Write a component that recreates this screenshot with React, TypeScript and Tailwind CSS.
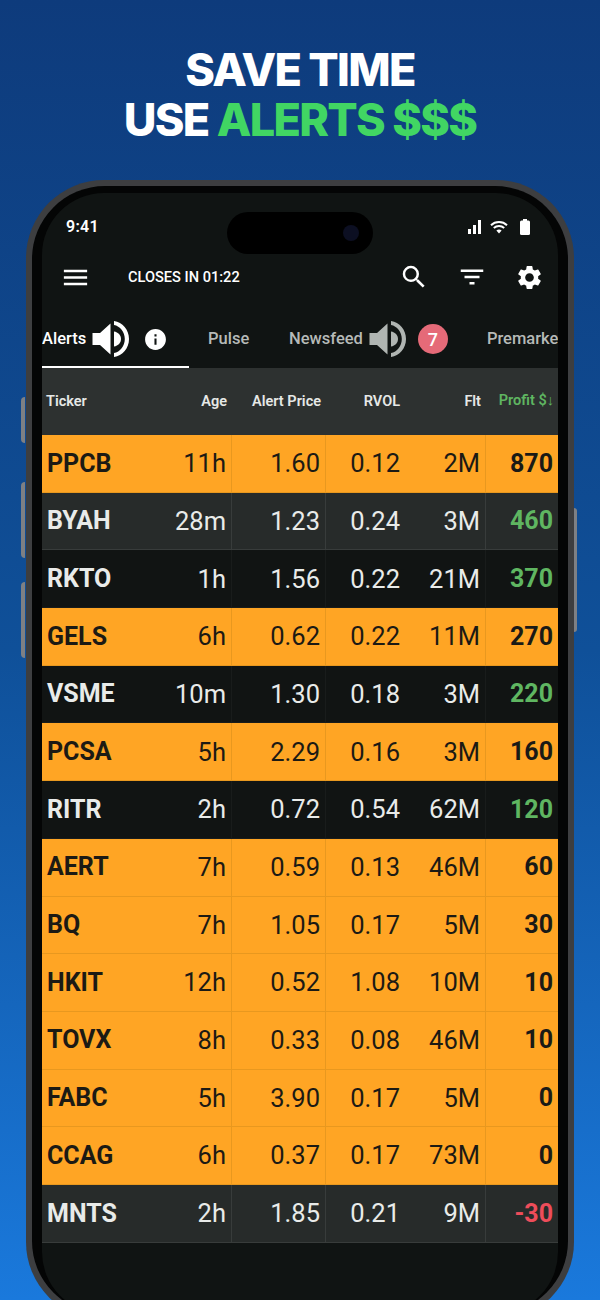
import { MdMenu, MdSearch, MdFilterList, MdSettings, MdInfo } from 'react-icons/md';

type Row = {
  ticker: string;
  age: string;
  price: string;
  rvol: string;
  flt: string;
  profit: string;
  tone: 'orange' | 'gray' | 'dark';
  profitClass: string;
};

const rows: Row[] = [
  { ticker: 'PPCB', age: '11h', price: '1.60', rvol: '0.12', flt: '2M', profit: '870', tone: 'orange', profitClass: 'text-[#1a1a16]' },
  { ticker: 'BYAH', age: '28m', price: '1.23', rvol: '0.24', flt: '3M', profit: '460', tone: 'gray', profitClass: 'text-[#5fb661]' },
  { ticker: 'RKTO', age: '1h', price: '1.56', rvol: '0.22', flt: '21M', profit: '370', tone: 'dark', profitClass: 'text-[#5fb661]' },
  { ticker: 'GELS', age: '6h', price: '0.62', rvol: '0.22', flt: '11M', profit: '270', tone: 'orange', profitClass: 'text-[#1a1a16]' },
  { ticker: 'VSME', age: '10m', price: '1.30', rvol: '0.18', flt: '3M', profit: '220', tone: 'dark', profitClass: 'text-[#5fb661]' },
  { ticker: 'PCSA', age: '5h', price: '2.29', rvol: '0.16', flt: '3M', profit: '160', tone: 'orange', profitClass: 'text-[#1a1a16]' },
  { ticker: 'RITR', age: '2h', price: '0.72', rvol: '0.54', flt: '62M', profit: '120', tone: 'dark', profitClass: 'text-[#5fb661]' },
  { ticker: 'AERT', age: '7h', price: '0.59', rvol: '0.13', flt: '46M', profit: '60', tone: 'orange', profitClass: 'text-[#1a1a16]' },
  { ticker: 'BQ', age: '7h', price: '1.05', rvol: '0.17', flt: '5M', profit: '30', tone: 'orange', profitClass: 'text-[#1a1a16]' },
  { ticker: 'HKIT', age: '12h', price: '0.52', rvol: '1.08', flt: '10M', profit: '10', tone: 'orange', profitClass: 'text-[#1a1a16]' },
  { ticker: 'TOVX', age: '8h', price: '0.33', rvol: '0.08', flt: '46M', profit: '10', tone: 'orange', profitClass: 'text-[#1a1a16]' },
  { ticker: 'FABC', age: '5h', price: '3.90', rvol: '0.17', flt: '5M', profit: '0', tone: 'orange', profitClass: 'text-[#1a1a16]' },
  { ticker: 'CCAG', age: '6h', price: '0.37', rvol: '0.17', flt: '73M', profit: '0', tone: 'orange', profitClass: 'text-[#1a1a16]' },
  { ticker: 'MNTS', age: '2h', price: '1.85', rvol: '0.21', flt: '9M', profit: '-30', tone: 'gray', profitClass: 'text-[#ee4d5a]' },
];

const toneClass = {
  orange: 'bg-[#ffa524] text-[#1c1a14] border-[#e8981f]',
  gray: 'bg-[#272b2a] text-[#e9ebe9] border-[#383c3b]',
  dark: 'bg-[#111413] text-[#e9ebe9] border-[#191c1b]',
};

function Speaker({ color }: { color: string }) {
  return (
    <svg viewBox="0 0 36 36" className="w-[37px] h-[36px]" fill={color}>
      <path d="M0 12h7.500L18 2.500v31L7.500 24H0z" />
      <path d="M21.500 10.500c4.200.6 7 3.800 7 7.500s-2.800 6.900-7 7.500z" />
      <path d="M21.500 0C30 1 36.500 8.700 36.500 18S30 35 21.500 36v-4c6-1 10.800-7 10.800-14S27.500 5 21.500 4z" />
    </svg>
  );
}

export default function App() {
  return (
    <div className="h-[1300px] w-[600px] overflow-hidden bg-gradient-to-b from-[#0e3b7c] via-[#0f5099] to-[#1a79dc] font-['Roboto',sans-serif]">
      <h1 className="pt-[45px] h-[180px] text-center font-['Inter',sans-serif] text-[45px] leading-[50px] font-extrabold tracking-[-1.7px] text-white">
        SAVE TIME
        <br />
        USE <span className="text-[#41d663]">ALERTS $$$</span>
      </h1>

      {/* phone */}
      <div className="relative mx-[26px] h-[1140px] rounded-[78px] bg-[#3d3e40] p-[6px]">
        <div className="absolute -left-[5px] top-[217px] h-[46px] w-[4px] rounded-l bg-[#7e8084]" />
        <div className="absolute -left-[5px] top-[302px] h-[76px] w-[4px] rounded-l bg-[#7e8084]" />
        <div className="absolute -left-[5px] top-[402px] h-[76px] w-[4px] rounded-l bg-[#7e8084]" />
        <div className="absolute -right-[3px] top-[328px] h-[124px] w-[3px] rounded-r bg-[#7e8084]" />

        <div className="h-full rounded-[73px] bg-[#040505] px-[10px] pt-[7px]">
          <div className="relative h-full rounded-[62px] bg-[#101413]">
            {/* status bar */}
            <div className="flex h-[68px] items-center justify-between pl-[24px] pr-[28px] text-white">
              <span className="text-[16px] font-semibold tracking-[0.3px]">9:41</span>
              <div className="flex items-center">
                <svg viewBox="0 0 14 14" className="w-[14px] h-[14px]" fill="#fff">
                  <rect x="0" y="9" width="3" height="5" />
                  <rect x="5" y="5" width="3" height="9" />
                  <rect x="10" y="0" width="3" height="14" />
                </svg>
                <svg viewBox="0 0 18 14" className="ml-[8px] w-[18px] h-[14px]" fill="none" stroke="#fff" strokeWidth="2">
                  <path d="M1 5.200C5.500 1 12.500 1 17 5.200" />
                  <path d="M3.800 8C6.800 5.300 11.200 5.300 14.200 8" />
                  <path d="M9 13.500l-2.600-3c1.500-1.200 3.700-1.200 5.200 0z" fill="#fff" stroke="none" />
                </svg>
                <svg viewBox="0 0 10 16" className="ml-[12px] w-[10px] h-[16px]" fill="#fff">
                  <rect x="3" y="0" width="4" height="2" />
                  <rect x="0" y="1.500" width="10" height="14.500" rx="1.500" />
                </svg>
              </div>
            </div>
            <div className="absolute left-[185px] top-[19px] h-[42px] w-[146px] rounded-full bg-black">
              <div className="absolute right-[14px] top-[13px] h-[16px] w-[16px] rounded-full bg-[#0c0f22]" />
            </div>

            {/* app bar */}
            <div className="flex h-[32px] items-center pl-[18px] pr-[14px] text-white">
              <MdMenu className="h-[31px] w-[31px]" />
              <span className="ml-[37px] mt-[2px] text-[14.600px] font-medium">CLOSES IN 01:22</span>
              <MdSearch className="ml-auto h-[30px] w-[30px]" />
              <MdFilterList className="ml-[28px] h-[30px] w-[30px]" />
              <MdSettings className="ml-[28px] h-[29px] w-[29px]" />
            </div>

            {/* tabs */}
            <div className="mt-[28px] flex h-[47px] overflow-hidden text-[16.500px] font-medium text-[#b6bab8]">
              <div className="flex w-[147px] shrink-0 items-start border-b-2 border-white text-white">
                <div className="flex h-[36px] items-center">
                  <span>Alerts</span>
                  <span className="ml-[6px]"><Speaker color="#ffffff" /></span>
                  <MdInfo className="ml-[14px] h-[25px] w-[25px]" />
                </div>
              </div>
              <div className="flex h-[36px] items-center pl-[19px]">
                <span className="w-[81px] shrink-0">Pulse</span>
                <span>Newsfeed</span>
                <span className="ml-[6px]"><Speaker color="#b0b5b2" /></span>
                <span className="ml-[12px] flex h-[30px] w-[30px] shrink-0 items-center justify-center rounded-full bg-[#e56a78] text-[18px] text-white">7</span>
                <span className="ml-[39px] shrink-0">Premarket</span>
              </div>
            </div>

            {/* table */}
            <div className="grid h-[67px] grid-cols-[100px_90px_94px_79px_81px_72px] items-center bg-[#2d3130] text-[14.500px] font-semibold text-[#e6e8e6]">
              <span className="pl-[4px]">Ticker</span>
              <span className="pr-[5px] text-right">Age</span>
              <span className="pr-[5px] text-right whitespace-nowrap">Alert Price</span>
              <span className="pr-[5px] text-right">RVOL</span>
              <span className="pr-[5px] text-right">Flt</span>
              <span className="pr-[4px] text-right text-[#5fb661] -mt-[2px] whitespace-nowrap">Profit $↓</span>
            </div>
            {rows.map(r => (
              <div
                key={r.ticker}
                className={`grid h-[57.700px] grid-cols-[100px_90px_94px_79px_81px_72px] items-center border-b text-[25.500px] ${toneClass[r.tone]}`}
              >
                <span className="pl-[5px] font-bold text-[25px]">{r.ticker}</span>
                <span className="flex h-full items-center justify-end border-r border-inherit pr-[5px]">{r.age}</span>
                <span className="flex h-full items-center justify-end border-r border-inherit pr-[5px]">{r.price}</span>
                <span className="pr-[5px] text-right">{r.rvol}</span>
                <span className="flex h-full items-center justify-end border-r border-inherit pr-[5px]">{r.flt}</span>
                <span className={`pr-[5px] text-right font-bold text-[25px] ${r.profitClass}`}>{r.profit}</span>
              </div>
            ))}
          </div>
        </div>
      </div>
    </div>
  );
}
